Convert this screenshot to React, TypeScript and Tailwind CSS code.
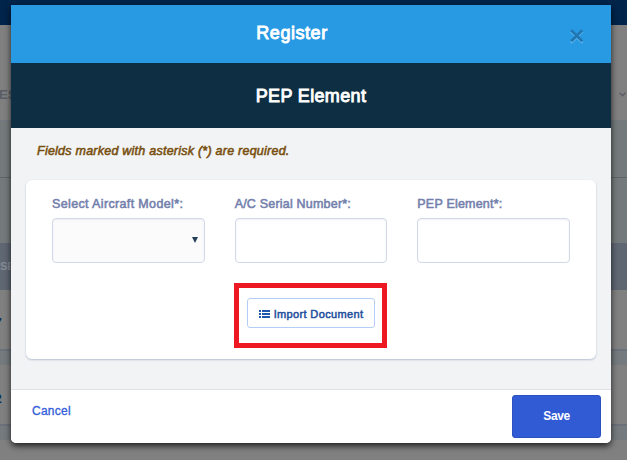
import type { ReactNode } from 'react';

function Field({ label, tracking = 'tracking-[0.2px]', children }: { label: string; tracking?: string; children: ReactNode }) {
  return (
    <label className="block">
      <span className={`block h-[22px] whitespace-nowrap text-[12.5px] leading-4 text-[#7480ac] [-webkit-text-stroke:0.55px_#7480ac] ${tracking}`}>
        {label}
      </span>
      {children}
    </label>
  );
}

function TextBox() {
  return (
    <span className="block h-[45px] w-full rounded-[4px] border border-[#d2d8e7] bg-white shadow-[inset_0_1px_2px_rgba(60,70,100,0.08)]" />
  );
}

function ListIcon() {
  return (
    <svg className="mr-1 h-[8px] w-[11px] shrink-0" viewBox="0 0 11 8" fill="#1d56ae" shapeRendering="crispEdges">
      <rect x="0" y="0" width="2" height="2" />
      <rect x="3" y="0" width="8" height="2" />
      <rect x="0" y="3" width="2" height="2" />
      <rect x="3" y="3" width="8" height="2" />
      <rect x="0" y="6" width="2" height="2" />
      <rect x="3" y="6" width="8" height="2" />
    </svg>
  );
}

function Backdrop() {
  return (
    <div className="flex h-full flex-col overflow-hidden bg-[#808080]">
      <div className="h-[25px] shrink-0 bg-[#00244a]" />
      <div className="flex h-[96px] shrink-0 items-center justify-between border-b border-[#747a82] pt-[44px]">
        <span className="-ml-px text-[13px] font-bold text-[#5a5d66]">ES</span>
        <svg className="mr-px h-[5px] w-[7px]" viewBox="0 0 7 5" fill="none" stroke="#5c5f66" strokeWidth="1.5">
          <path d="M.5 .7 3.5 3.7 6.5 .7" />
        </svg>
      </div>
      <div className="h-[57px] shrink-0 border-b border-[#5e6467] bg-[#747a7b]" />
      <div className="h-[65px] shrink-0 bg-[#747a7b]" />
      <div className="flex h-[47px] shrink-0 items-center bg-[#5f6773] text-[11px] font-bold text-[#858b93]">SE</div>
      <div className="flex h-[61px] shrink-0 items-center border-b-2 border-[#6b707a] pt-1.5 text-[12px] font-bold text-[#062e58]">
        <span className="-ml-[5px]">7</span>
      </div>
      <div className="h-[14px] shrink-0 bg-[#747a7d]" />
      <div className="flex h-[61px] shrink-0 items-center border-b-2 border-[#6b707a] pt-2 text-[12px] font-bold text-[#062e58]">
        <span className="-ml-[5px]">2</span>
      </div>
      <div className="h-[14px] shrink-0 bg-[#747a7d]" />
    </div>
  );
}

export default function App() {
  return (
    <div className="relative h-[460px] w-[627px] overflow-hidden font-['Liberation_Sans',Arial,sans-serif]">
      <Backdrop />
      <div
        role="dialog"
        className="absolute left-[11px] top-[5px] flex h-[438px] w-[600px] flex-col overflow-hidden rounded-b-[5px] bg-[#f1f3f5] shadow-[0_3px_6px_rgba(0,0,0,0.75)]"
      >
        <header className="flex h-[58px] shrink-0 items-center bg-[#289ae4] pr-[27px]">
          <h1 className="flex-1 pb-[2px] pl-[3px] text-center text-[18px] leading-6 tracking-[0.55px] text-white [-webkit-text-stroke:0.9px_white]">Register</h1>
          <button aria-label="Close" className="mt-[5px]">
            <svg className="h-[15px] w-[14px]" viewBox="0 0 14 15" fill="none" strokeWidth="2.7">
              <path d="M1 2.2 12.5 13.7M12.5 2.2 1 13.7" stroke="#5bb3eb" />
              <path d="M1.2 1.2 12.3 12.3M12.3 1.2 1.2 12.3" stroke="#2177b1" />
            </svg>
          </button>
        </header>
        <div className="flex h-[65px] shrink-0 items-center justify-center bg-[#0e2f43]">
          <h2 className="text-[18px] leading-6 tracking-[0.35px] text-white [-webkit-text-stroke:0.9px_white]">PEP Element</h2>
        </div>
        <main className="h-[262px] shrink-0 border-b border-[#dee2e7] px-[15px] pt-[15px]">
          <p className="h-[37px] pl-[11px] text-[12.5px] italic leading-4 tracking-[0.24px] text-[#79500f] [-webkit-text-stroke:0.55px_#79500f]">
            Fields marked with asterisk (*) are required.
          </p>
          <section className="h-[179px] rounded-[6px] bg-white px-[26px] pt-[16px] shadow-[0_1px_2px_rgba(95,115,150,0.4)]">
            <div className="grid grid-cols-3 gap-[30px]">
              <Field label="Select Aircraft Model*:" tracking="tracking-[0.36px]">
                <span className="flex h-[45px] w-full items-center justify-end rounded-[4px] border border-[#d2d8e7] bg-[#fbfbfc] pr-[6px] shadow-[inset_0_1px_2px_rgba(60,70,100,0.08)]">
                  <svg className="mb-[2px] h-[6px] w-[6px]" viewBox="0 0 6 6" fill="#263f58">
                    <path d="M0 0h6L3 6z" />
                  </svg>
                </span>
              </Field>
              <Field label="A/C Serial Number*:">
                <TextBox />
              </Field>
              <Field label="PEP Element*:">
                <TextBox />
              </Field>
            </div>
            <div className="ml-[182px] mt-5 h-[65px] w-[153px] border-[5px] border-[#ed1822] px-[8px] pt-[10px]">
              <button className="flex h-[30px] w-[128px] items-center justify-center whitespace-nowrap rounded-[3px] border border-[#b4cff7] bg-white pt-[2px] text-[11px] tracking-[0.35px] text-[#1f509d] [-webkit-text-stroke:0.5px_#1f509d]">
                <ListIcon />
                Import Document
              </button>
            </div>
          </section>
        </main>
        <footer className="flex flex-1 items-start justify-between bg-white pl-[21px] pr-[10px] pt-[5px]">
          <button className="mt-[8px] text-[12px] leading-4 tracking-[0.25px] text-[#365fda] [-webkit-text-stroke:0.35px_#365fda]">Cancel</button>
          <button className="h-[43px] w-[89px] rounded-[3px] border border-[#2b50c0] bg-[#305bd5] pb-[2px] text-[12px] font-bold tracking-[-0.4px] text-white">
            Save
          </button>
        </footer>
      </div>
    </div>
  );
}
